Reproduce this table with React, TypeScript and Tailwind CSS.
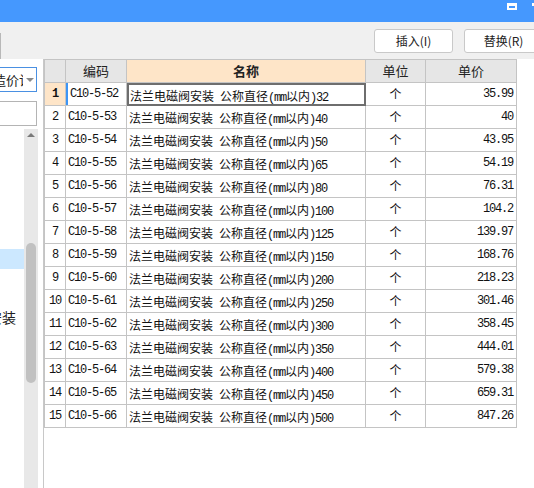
import React from "react";

const rows = [
  ["C10-5-52", "32", "35.99"],
  ["C10-5-53", "40", "40"],
  ["C10-5-54", "50", "43.95"],
  ["C10-5-55", "65", "54.19"],
  ["C10-5-56", "80", "76.31"],
  ["C10-5-57", "100", "104.2"],
  ["C10-5-58", "125", "139.97"],
  ["C10-5-59", "150", "168.76"],
  ["C10-5-60", "200", "218.23"],
  ["C10-5-61", "250", "301.46"],
  ["C10-5-62", "300", "358.45"],
  ["C10-5-63", "350", "444.01"],
  ["C10-5-64", "400", "579.38"],
  ["C10-5-65", "450", "659.31"],
  ["C10-5-66", "500", "847.26"],
];

const cjk = "font-['Noto_Sans_CJK_SC',sans-serif]";
const cjk12 = `${cjk} text-[12px]`;
const mono = "font-['Liberation_Mono','DejaVu_Sans_Mono',monospace] text-[12px] tracking-[-1.2px]";

// ascii runs in a narrow mono face, the rest in CJK at 12px
function Mixed({ text }: { text: string }) {
  const parts = text.match(/[\x00-\x7f]+|[^\x00-\x7f]+/g) ?? [];
  return (
    <span className="whitespace-pre">
      {parts.map((p, i) => (
        <span key={i} className={/^[\x00-\x7f]+$/.test(p) ? mono : cjk12}>
          {p}
        </span>
      ))}
    </span>
  );
}

function HeadCell({ w, label, bold, bg = "bg-[#e6e6e6]" }: { w: string; label?: string; bold?: boolean; bg?: string }) {
  return (
    <div
      className={`${w} ${bg} h-full shrink-0 border-r border-[#c4c4c4] flex items-center justify-center ${cjk} text-[13px] text-[#222] ${
        bold ? "font-bold" : ""
      }`}
    >
      {label}
    </div>
  );
}

function Row({ i, row }: { i: number; row: string[] }) {
  const first = i === 0;
  return (
    <div className="flex h-[23px] border-b border-[#c4c4c4]">
      <div
        className={`w-[21px] shrink-0 border-r border-[#c4c4c4] flex items-center justify-center ${mono} text-[#111] ${
          first ? "bg-[#fee5c8] font-bold" : ""
        }`}
      >
        {i + 1}
      </div>
      <div
        className={`w-[61px] shrink-0 border-r border-[#c4c4c4] flex items-center pl-[2px] text-[#111] ${
          first ? "border-l-2 border-l-[#3d95f5] pl-0" : ""
        }`}
      >
        <span className={mono}>{row[0]}</span>
      </div>
      <div
        className={`w-[239px] shrink-0 flex items-center text-[#111] ${
          first ? "border-2 border-[#6e6e6e] -mb-px pl-[1px] relative z-10" : "border-r border-[#c4c4c4] pl-[2px]"
        }`}
      >
        <Mixed text={`法兰电磁阀安装 公称直径(mm以内)${row[1]}`} />
      </div>
      <div className={`w-[60px] shrink-0 border-r border-[#c4c4c4] flex items-center justify-center ${cjk12} text-[#111]`}>
        个
      </div>
      <div className="w-[91px] shrink-0 border-r border-[#c4c4c4] flex items-center justify-end pr-[3px] text-[#111]">
        <span className={mono}>{row[2]}</span>
      </div>
    </div>
  );
}

export default function App() {
  return (
    <div className="w-[534px] h-[488px] overflow-hidden bg-white flex flex-col">
      <div className="h-[22px] shrink-0 bg-[#4598fe] flex items-start justify-end">
        <div className="mt-[3px] w-[10px] h-[7px] border-2 border-t-[3px] border-white" />
        <div className="ml-[15px] mt-[3px] w-[2px] h-[3px] bg-white" />
      </div>
      <div className="h-[37px] shrink-0 bg-[#f0f0f0] flex items-start">
        <div className="self-end h-[26px] w-0 border-l border-[#b8b8b8]" />
        <div className="ml-[373px] mt-[7px] flex gap-[11px]">
          <button className={`w-[79px] h-[24px] bg-white border border-[#c9c9c9] rounded-[3px] ${cjk12} text-[#222]`}>
            插入(I)
          </button>
          <button className={`w-[79px] h-[24px] bg-white border border-[#c9c9c9] rounded-[3px] ${cjk12} text-[#222]`}>
            替换(R)
          </button>
        </div>
      </div>
      <div className="flex-1 flex min-h-0">
        <div className="w-[44px] shrink-0 border-r border-[#c8c8c8] flex flex-col bg-white">
          <div className="mt-[8px] w-[37px] h-[25px] border border-l-0 border-[#4a90e2] flex items-center">
            <div className="w-[23px] overflow-hidden">
              <span className={`${cjk} text-[13px] text-[#222] whitespace-nowrap -ml-[7px] block`}>造价计价</span>
            </div>
            <div className="ml-[3px] w-0 h-0 border-l-[4px] border-r-[4px] border-t-[4px] border-l-transparent border-r-transparent border-t-[#8a8a8a]" />
          </div>
          <div className="mt-[9px] w-[37px] h-[25px] border border-l-0 border-[#b4b4b4]" />
          <div className="mt-[3px] flex-1 flex">
            <div className="w-[24px] shrink-0 flex flex-col">
              <div className="mt-[120px] h-[20px] bg-[#cce8ff]" />
              <div className="mt-[38px] h-[20px] flex items-center justify-end overflow-hidden pr-[8px]">
                <span className={`${cjk} text-[14px] text-[#222] whitespace-nowrap`}>阀安装</span>
              </div>
            </div>
            <div className="w-[14px] shrink-0 bg-[#e8e8e8] flex flex-col items-center">
              <div className="mt-[4px] w-0 h-0 border-l-[4px] border-r-[4px] border-b-[4px] border-l-transparent border-r-transparent border-b-[#7a7a7a]" />
              <div className="mt-[106px] w-[10px] h-[140px] rounded-full bg-[#c1c1c1]" />
            </div>
          </div>
        </div>
        <div className="flex-1 bg-white">
          <div className="w-[473px] border-l border-t border-[#c4c4c4]">
            <div className="flex h-[23px] border-b border-[#c4c4c4]">
              <HeadCell w="w-[21px]" />
              <HeadCell w="w-[61px]" label="编码" />
              <HeadCell w="w-[239px]" label="名称" bold bg="bg-[#fee5c8]" />
              <HeadCell w="w-[60px]" label="单位" />
              <HeadCell w="w-[91px]" label="单价" />
            </div>
            {rows.map((r, i) => (
              <Row key={i} i={i} row={r} />
            ))}
          </div>
        </div>
      </div>
    </div>
  );
}
